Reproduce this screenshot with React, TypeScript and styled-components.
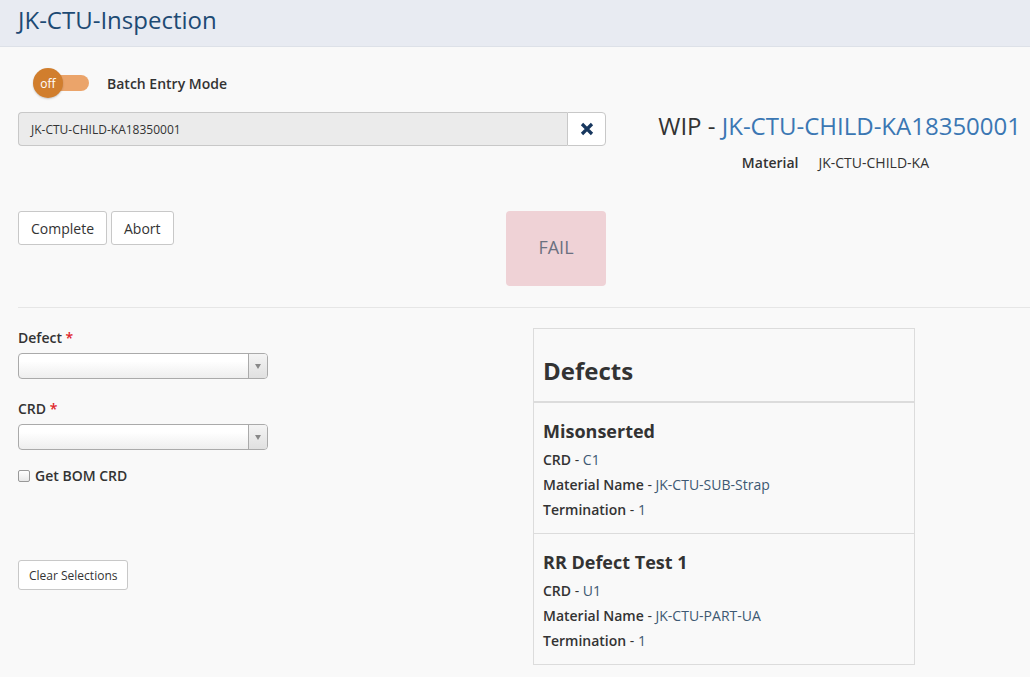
import React from "react";
import styled, { createGlobalStyle } from "styled-components";

const Global = createGlobalStyle`
  html, body { margin: 0; padding: 0; background: #f9f9f9; }
  body { font-family: "Open Sans", "Noto Sans", sans-serif; color: #333; }
  * { box-sizing: border-box; }
`;

const Header = styled.header`
  height: 47px;
  background: #e8ebf2;
  border-bottom: 1px solid #dde1e8;
  padding: 0 18px;
  display: flex;
  align-items: center;
`;

const Title = styled.h1`
  margin: 0;
  font-size: 24px;
  font-weight: 400;
  color: #1d4a74;
  line-height: 1;
  position: relative;
  top: -3px;
`;

const Main = styled.main`
  padding: 0 0 0 18px;
`;

const Top = styled.div`
  display: flex;
`;

const LeftTop = styled.div`
  width: 588px;
  flex: none;
  display: flex;
  flex-direction: column;
`;

const ToggleRow = styled.div`
  display: flex;
  align-items: center;
  height: 30px;
  margin-top: 21px;
  padding-left: 15px;
  gap: 18px;
`;

const Switch = styled.div`
  position: relative;
  width: 56px;
  height: 30px;
`;

const Track = styled.div`
  position: absolute;
  left: 7px;
  top: 7px;
  width: 49px;
  height: 16px;
  border-radius: 8px;
  background: #eba46a;
`;

const Knob = styled.div`
  position: absolute;
  left: 0;
  top: 0;
  width: 30px;
  height: 30px;
  border-radius: 50%;
  background: #d17e2d;
  color: #fff;
  font-size: 12px;
  display: flex;
  align-items: center;
  justify-content: center;
  box-shadow: 0 1px 2px rgba(0,0,0,0.2);
`;

const ToggleLabel = styled.span`
  font-size: 14px;
  font-weight: 600;
  color: #333;
`;

const InputGroup = styled.div`
  display: flex;
  height: 34px;
  margin-top: 14px;
`;

const TextInput = styled.div`
  flex: 1;
  background: #ebebeb;
  border: 1px solid #c8c8c8;
  border-right: none;
  border-radius: 4px 0 0 4px;
  font-size: 12px;
  color: #333;
  padding-left: 12px;
  display: flex;
  align-items: center;
`;

const ClearBtn = styled.button`
  width: 39px;
  background: #fff;
  border: 1px solid #c8c8c8;
  border-radius: 0 4px 4px 0;
  display: flex;
  align-items: center;
  justify-content: center;
  padding: 0;
`;

const ActionRow = styled.div`
  display: flex;
  justify-content: space-between;
  align-items: flex-start;
  margin-top: 65px;
`;

const BtnGroup = styled.div`
  display: flex;
  gap: 4px;
`;

const Button = styled.button<{ $small?: boolean }>`
  font-family: "Open Sans", sans-serif;
  font-size: ${(p) => (p.$small ? "12px" : "14px")};
  color: #333;
  background: #fff;
  border: 1px solid #c8c8c8;
  border-radius: 3px;
  height: ${(p) => (p.$small ? "30px" : "34px")};
  padding: ${(p) => (p.$small ? "0 10px" : "0 12px")};
`;

const FailBox = styled.div`
  width: 100px;
  height: 75px;
  padding-bottom: 4px;
  background: #efd2d6;
  border-radius: 4px;
  color: #6b7080;
  font-size: 18px;
  display: flex;
  align-items: center;
  justify-content: center;
`;

const RightTop = styled.div`
  flex: 1;
  min-width: 0;
  padding: 63px 9px 0 0;
  display: flex;
  flex-direction: column;
  align-items: flex-end;
`;

const Wip = styled.div`
  font-size: 24px;
  color: #333;
  line-height: 32px;
  white-space: nowrap;
`;

const WipId = styled.span`
  color: #3b77b3;
`;

const MaterialRow = styled.div`
  display: flex;
  gap: 20px;
  font-size: 14px;
  line-height: 18px;
  margin-top: 12px;
  margin-right: 92px;
  white-space: nowrap;
`;

const MatLabel = styled.span`
  font-weight: 600;
`;

const Divider = styled.hr`
  border: none;
  border-top: 1px solid #e6e6e6;
  margin: 21px 0 0;
`;

const Bottom = styled.div`
  display: grid;
  grid-template-columns: 515px 382px;
  padding-top: 20px;
`;

const Form = styled.div`
  display: flex;
  flex-direction: column;
`;

const Label = styled.label`
  font-size: 14px;
  font-weight: 600;
  color: #333;
  line-height: 20px;
`;

const Req = styled.span`
  color: #e0242a;
`;

const Select = styled.div`
  width: 250px;
  height: 26px;
  margin-top: 5px;
  border: 1px solid #aaa;
  border-radius: 4px;
  background: linear-gradient(#fff 30%, #eee);
  display: flex;
  justify-content: flex-end;
  overflow: hidden;
`;

const SelectArrow = styled.div`
  width: 19px;
  border-left: 1px solid #aaa;
  background: linear-gradient(#f4f4f4, #e0e0e0);
  display: flex;
  align-items: center;
  justify-content: center;
  &::after {
    content: "";
    border-left: 3px solid transparent;
    border-right: 3px solid transparent;
    border-top: 5px solid #888;
  }
`;

const FieldGap = styled.div<{ $h: number }>`
  height: ${(p) => p.$h}px;
`;

const CheckRow = styled.label`
  display: flex;
  align-items: center;
  gap: 5px;
  font-size: 14px;
  font-weight: 600;
`;

const Box = styled.span`
  width: 12px;
  height: 12px;
  border: 1px solid #999;
  border-radius: 2px;
  background: linear-gradient(#fff, #e8e8e8);
`;

const ClearWrap = styled.div`
  margin-top: 75px;
`;

const Panel = styled.section`
  border: 1px solid #dcdcdc;
`;

const PanelHead = styled.div`
  height: 74px;
  border-bottom: 2px solid #dcdcdc;
  padding: 24px 9px 0;
`;

const PanelTitle = styled.h2`
  margin: 0;
  font-size: 24px;
  font-weight: 700;
  color: #333;
  line-height: 36px;
`;

const Item = styled.div<{ $last?: boolean }>`
  padding: 16px 9px 11px;
  border-bottom: ${(p) => (p.$last ? "none" : "1px solid #dcdcdc")};
`;

const ItemTitle = styled.h3`
  margin: 0 0 4px;
  font-size: 18px;
  font-weight: 700;
  color: #333;
  line-height: 24px;
`;

const Line = styled.div`
  font-size: 14px;
  line-height: 25px;
`;

const Key = styled.span`
  font-weight: 600;
  color: #333;
`;

const Val = styled.span`
  color: #3d5872;
`;

const defects = [
  { name: "Misonserted", crd: "C1", mat: "JK-CTU-SUB-Strap", term: "1" },
  { name: "RR Defect Test 1", crd: "U1", mat: "JK-CTU-PART-UA", term: "1" },
];

export default function App() {
  return (
    <>
      <Global />
      <Header>
        <Title>JK-CTU-Inspection</Title>
      </Header>
      <Main>
        <Top>
          <LeftTop>
            <ToggleRow>
              <Switch>
                <Track />
                <Knob>off</Knob>
              </Switch>
              <ToggleLabel>Batch Entry Mode</ToggleLabel>
            </ToggleRow>
            <InputGroup>
              <TextInput>JK-CTU-CHILD-KA18350001</TextInput>
              <ClearBtn>
                <svg width="14" height="14" viewBox="0 0 14 14">
                  <path d="M2 2 L12 12 M12 2 L2 12" stroke="#17375e" strokeWidth="3.2" strokeLinecap="butt" />
                </svg>
              </ClearBtn>
            </InputGroup>
            <ActionRow>
              <BtnGroup>
                <Button>Complete</Button>
                <Button>Abort</Button>
              </BtnGroup>
              <FailBox>FAIL</FailBox>
            </ActionRow>
          </LeftTop>
          <RightTop>
            <Wip>
              WIP - <WipId>JK-CTU-CHILD-KA18350001</WipId>
            </Wip>
            <MaterialRow>
              <MatLabel>Material</MatLabel>
              <span>JK-CTU-CHILD-KA</span>
            </MaterialRow>
          </RightTop>
        </Top>
        <Divider />
        <Bottom>
          <Form>
            <Label>
              Defect <Req>*</Req>
            </Label>
            <Select>
              <SelectArrow />
            </Select>
            <FieldGap $h={20} />
            <Label>
              CRD <Req>*</Req>
            </Label>
            <Select>
              <SelectArrow />
            </Select>
            <FieldGap $h={16} />
            <CheckRow>
              <Box />
              Get BOM CRD
            </CheckRow>
            <ClearWrap>
              <Button $small>Clear Selections</Button>
            </ClearWrap>
          </Form>
          <Panel>
            <PanelHead>
              <PanelTitle>Defects</PanelTitle>
            </PanelHead>
            {defects.map((d, i) => (
              <Item key={d.name} $last={i === defects.length - 1}>
                <ItemTitle>{d.name}</ItemTitle>
                <Line>
                  <Key>CRD</Key> - <Val>{d.crd}</Val>
                </Line>
                <Line>
                  <Key>Material Name</Key> - <Val>{d.mat}</Val>
                </Line>
                <Line>
                  <Key>Termination</Key> - <Val>{d.term}</Val>
                </Line>
              </Item>
            ))}
          </Panel>
        </Bottom>
      </Main>
    </>
  );
}
